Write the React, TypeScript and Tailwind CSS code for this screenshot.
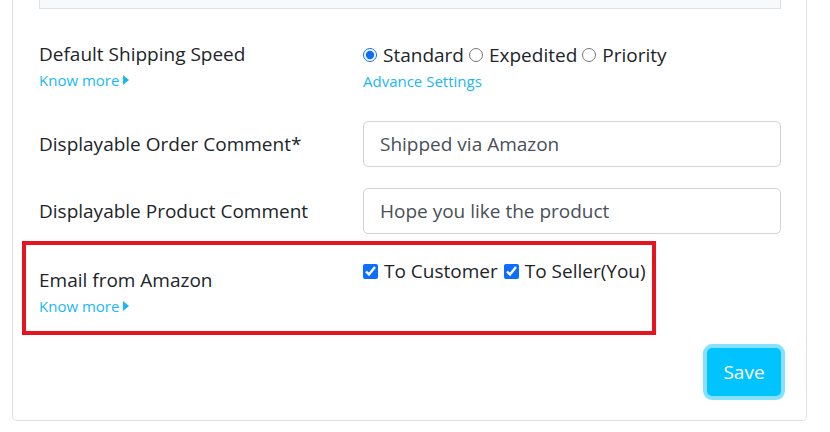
import React from "react";

const Caret = () => (
  <svg width="6" height="10" viewBox="0 0 6 10" className="inline-block ml-[4px]">
    <path d="M0 0 L6 5 L0 10 Z" fill="#1ab7f5" />
  </svg>
);

const KnowMore = () => (
  <div className="flex items-center text-[15px] leading-[20px] text-[#1ab7f5]">
    Know more
    <Caret />
  </div>
);

export default function App() {
  return (
    <div className="w-[830px] h-[432px] bg-white overflow-hidden" style={{ fontFamily: '"Open Sans", "Noto Sans", sans-serif' }}>
      <div className="ml-[12px] w-[795px] h-[421px] border-x border-b border-[#dee2e6] rounded-b-[5px] text-[#212529]">
        <div className="ml-[26px] w-[742px] h-[9px] bg-[#f8f9fa] border-x border-b border-[#dee2e6]" />
        {/* Row 1 */}
        <div className="flex ml-[26px] mt-[31px]">
          <div className="w-[324px]">
            <div className="text-[19px] leading-[28px]">Default Shipping Speed</div>
            <div className="mt-[2px]"><KnowMore /></div>
          </div>
          <div className="pt-[1px]">
            <div className="flex items-center text-[19px] leading-[28px] gap-[5px]">
              <label className="flex items-center gap-[6px]">
                <input type="radio" name="speed" defaultChecked className="m-0 w-[14px] h-[14px] accent-[#0d6efd]" />
                Standard
              </label>
              <label className="flex items-center gap-[6px]">
                <input type="radio" name="speed" className="m-0 w-[14px] h-[14px]" />
                Expedited
              </label>
              <label className="flex items-center gap-[6px]">
                <input type="radio" name="speed" className="m-0 w-[14px] h-[14px]" />
                Priority
              </label>
            </div>
            <div className="text-[15px] leading-[20px] text-[#1ab7f5] mt-[2px]">Advance Settings</div>
          </div>
        </div>
        {/* Row 2 */}
        <div className="flex items-center ml-[26px] mt-[30px]">
          <div className="w-[324px] text-[19px] leading-[28px]">Displayable Order Comment*</div>
          <div className="w-[418px] h-[46px] border border-[#ced4da] rounded-[5px] px-[16px] flex items-center text-[19px] text-[#495057]">
            Shipped via Amazon
          </div>
        </div>
        {/* Row 3 */}
        <div className="flex items-center ml-[26px] mt-[21px]">
          <div className="w-[324px] text-[19px] leading-[28px]">Displayable Product Comment</div>
          <div className="w-[418px] h-[46px] border border-[#ced4da] rounded-[5px] px-[16px] flex items-center text-[19px] text-[#495057]">
            Hope you like the product
          </div>
        </div>
        {/* Red box */}
        <div className="ml-[9px] mt-[7px] w-[634px] h-[94px] border-[4px] border-[#e5141f] flex pl-[13px] pt-[12px]">
          <div className="w-[324px] pt-[9px]">
            <div className="text-[19px] leading-[28px]">Email from Amazon</div>
            <div className="mt-[2px]"><KnowMore /></div>
          </div>
          <div className="flex items-center text-[19px] leading-[28px] gap-[6px] h-[28px]">
            <label className="flex items-center gap-[6px]">
              <input type="checkbox" defaultChecked className="m-0 w-[15px] h-[15px] accent-[#0d6efd]" />
              To Customer
            </label>
            <label className="flex items-center gap-[6px]">
              <input type="checkbox" defaultChecked className="m-0 w-[15px] h-[15px] accent-[#0d6efd]" />
              To Seller(You)
            </label>
          </div>
        </div>
        {/* Save */}
        <div className="flex justify-end mr-[25px] mt-[13px]">
          <button className="w-[74px] h-[48px] bg-[#00c3ff] text-white text-[19px] rounded-[5px] ring-[4px] ring-[#86e0ff]">
            Save
          </button>
        </div>
      </div>
    </div>
  );
}
